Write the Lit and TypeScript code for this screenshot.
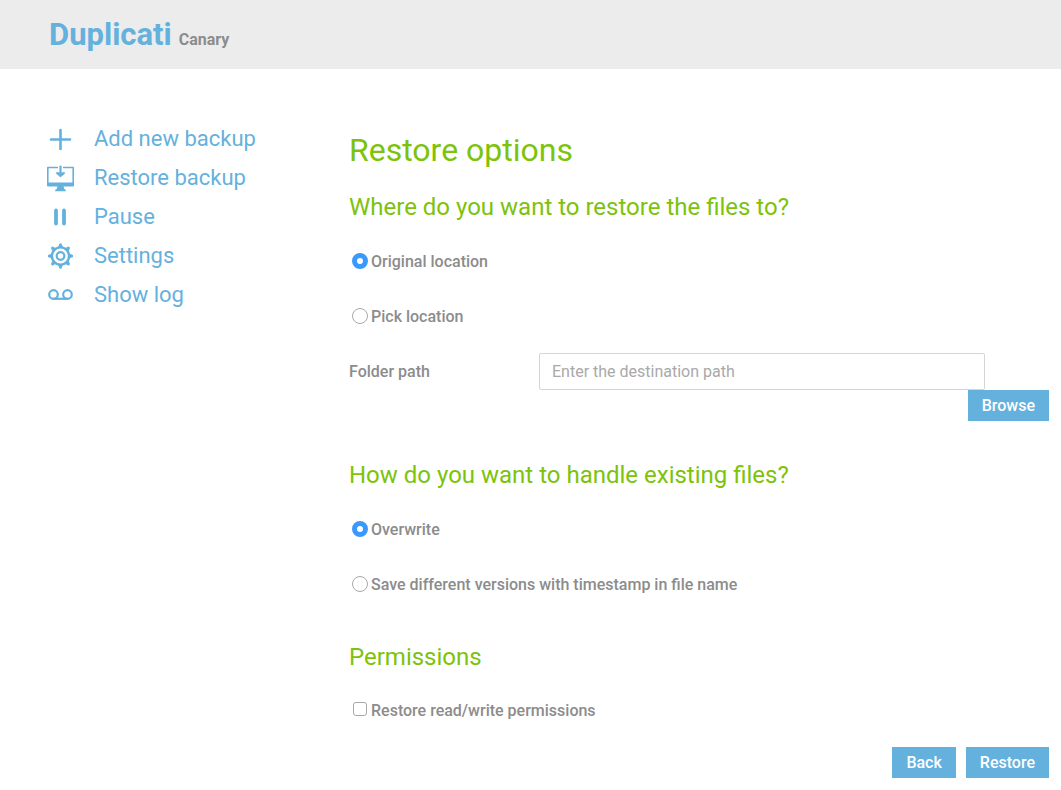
import { LitElement, html, css, svg } from "lit";
import { customElement, state } from "lit/decorators.js";

const icons = {
  add: svg`<path d="M13.500 5v19M4 14.500h19" fill="none" stroke="currentColor" stroke-width="2.600" stroke-linecap="round" />`,
  restore: svg`
    <path d="M11 3.500H.8V20h25.400V3.500H16" fill="none" stroke="currentColor" stroke-width="1.600" stroke-linejoin="round" />
    <path d="M0 18.500h27V21.500q0 1-1 1H1q-1 0-1-1zM10.500 22.500h6l.8 2.500q1.700.3 1.700 2.200H8q0-1.900 1.700-2.200z" fill="currentColor" />
    <path d="M13.500 2.600v7" fill="none" stroke="currentColor" stroke-width="2.200" stroke-linecap="round" />
    <path d="M9.800 8.200q3.700 1.600 7.400 0l.6 1.200L13.500 13 9.200 9.400z" fill="currentColor" stroke="currentColor" stroke-width=".6" stroke-linejoin="round" />`,
  pause: svg`<path d="M9 7.500v13M17 7.500v13" fill="none" stroke="currentColor" stroke-width="3.800" stroke-linecap="round" />`,
  settings: svg`
    <circle cx="13.500" cy="14" r="8.600" fill="none" stroke="currentColor" stroke-width="2.400" />
    <circle cx="13.500" cy="14" r="3.800" fill="none" stroke="currentColor" stroke-width="2.200" />
    ${[0, 45, 90, 135, 180, 225, 270, 315].map(
      (a) => svg`<path d="M10 5.300Q11.900 4.500 12 2.800a1.500 1.500 0 0 1 3 0Q15.100 4.500 17 5.300z" fill="currentColor" transform="rotate(${a} 13.500 14)" />`
    )}`,
  log: svg`
    <circle cx="6.500" cy="13.500" r="4.300" fill="none" stroke="currentColor" stroke-width="2.200" />
    <circle cx="20.500" cy="13.500" r="4.300" fill="none" stroke="currentColor" stroke-width="2.200" />
    <path d="M6.500 17.800h14" stroke="currentColor" stroke-width="2.200" />`,
};

const menu = [
  { label: "Add new backup", icon: icons.add },
  { label: "Restore backup", icon: icons.restore },
  { label: "Pause", icon: icons.pause },
  { label: "Settings", icon: icons.settings },
  { label: "Show log", icon: icons.log },
];

@customElement("app-root")
export class AppRoot extends LitElement {
  @state() private location = "original";
  @state() private existing = "overwrite";

  static styles = css`
    :host {
      display: block;
      min-height: 100vh;
      background: #fff;
      color: #8c8c8c;
      font: 500 16px/24px Roboto, "Noto Sans", sans-serif;
    }
    * {
      box-sizing: border-box;
    }
    header {
      display: flex;
      align-items: baseline;
      gap: 7px;
      padding: 15px 49px 14px;
      background: #ececec;
      font-weight: 700;
    }
    .brand {
      color: #65b1dd;
      font-size: 31px;
      line-height: 40px;
      text-decoration: none;
    }
    .page {
      display: flex;
      padding: 50px 12px 12px 47px;
    }
    nav {
      flex: 0 0 302px;
    }
    nav ul {
      list-style: none;
      margin: 0;
      padding: 0;
    }
    nav a {
      display: flex;
      align-items: center;
      gap: 19px;
      height: 39px;
      color: #65b1dd;
      font-size: 22px;
      font-weight: 400;
      text-decoration: none;
    }
    svg {
      display: block;
      width: 28px;
      height: 28px;
    }
    form {
      flex: 1;
      min-width: 0;
      padding-top: 11px;
    }
    h1,
    h2 {
      margin: 0;
      color: #7cc30a;
      font-weight: 400;
    }
    h1 {
      font-size: 32px;
      line-height: 40px;
    }
    h2 {
      font-size: 24px;
      line-height: 30px;
    }
    fieldset {
      display: block;
      margin: 0;
      padding: 0;
      border: 0;
      min-width: 0;
    }
    legend {
      display: block;
      padding: 0;
    }
    .first {
      margin-top: 22px;
    }
    .existing {
      margin-top: 39px;
    }
    .permissions {
      margin-top: 45px;
    }
    .choices {
      display: grid;
      gap: 31px;
      padding-top: 28px;
    }
    .permissions .choices {
      padding-top: 27px;
    }
    .choice {
      display: flex;
      align-items: center;
      gap: 3px;
      padding-left: 3px;
    }
    .choice input {
      appearance: none;
      flex: none;
      width: 16px;
      height: 16px;
      margin: 0 0 2px;
      border: 1px solid #a9a9a9;
      border-radius: 50%;
      background: #fff;
    }
    .choice input:checked {
      border: 5px solid #3b99fc;
    }
    .choice input[type="checkbox"] {
      width: 14px;
      height: 14px;
      margin: 0 1px 4px;
      border-radius: 3px;
    }
    .choice input[type="checkbox"]:checked {
      background: #3b99fc;
    }
    .folder {
      display: grid;
      grid-template-columns: 190px 1fr;
      align-items: center;
      padding: 24px 64px 0 0;
    }
    .folder input {
      width: 100%;
      height: 37px;
      padding: 0 12px;
      border: 1px solid #d5d5d5;
      border-radius: 2px;
      background: #fff;
      color: #8c8c8c;
      font: inherit;
      font-weight: 400;
    }
    .folder input::placeholder {
      color: #a9a9a9;
      opacity: 1;
    }
    .actions {
      display: flex;
      justify-content: flex-end;
      gap: 10px;
    }
    .submit {
      padding-top: 24px;
    }
    button {
      height: 31px;
      padding: 0 14px;
      border: 0;
      border-radius: 0;
      background: #65b1dd;
      color: #fff;
      font: inherit;
      cursor: pointer;
    }
  `;

  private radio(name: string, value: string, current: string, label: string, pick: (v: string) => void) {
    return html`<label class="choice">
      <input type="radio" name=${name} .value=${value} .checked=${current === value} @change=${() => pick(value)} />
      <span>${label}</span>
    </label>`;
  }

  render() {
    const setLocation = (v: string) => (this.location = v);
    const setExisting = (v: string) => (this.existing = v);
    return html`
      <header><a class="brand" href="#">Duplicati</a><span>Canary</span></header>
      <div class="page">
        <nav>
          <ul>
            ${menu.map(
              (m) => html`<li>
                <a href="#"><svg viewBox="0 0 28 28" aria-hidden="true">${m.icon}</svg><span>${m.label}</span></a>
              </li>`
            )}
          </ul>
        </nav>
        <form @submit=${(e: Event) => e.preventDefault()}>
          <h1>Restore options</h1>
          <fieldset class="first">
            <legend><h2>Where do you want to restore the files to?</h2></legend>
            <div class="choices">
              ${this.radio("location", "original", this.location, "Original location", setLocation)}
              ${this.radio("location", "custom", this.location, "Pick location", setLocation)}
            </div>
            <div class="folder">
              <label for="path">Folder path</label>
              <input id="path" type="text" placeholder="Enter the destination path" />
            </div>
            <div class="actions"><button type="button">Browse</button></div>
          </fieldset>
          <fieldset class="existing">
            <legend><h2>How do you want to handle existing files?</h2></legend>
            <div class="choices">
              ${this.radio("existing", "overwrite", this.existing, "Overwrite", setExisting)}
              ${this.radio("existing", "rename", this.existing, "Save different versions with timestamp in file name", setExisting)}
            </div>
          </fieldset>
          <fieldset class="permissions">
            <legend><h2>Permissions</h2></legend>
            <div class="choices">
              <label class="choice"><input type="checkbox" /><span>Restore read/write permissions</span></label>
            </div>
          </fieldset>
          <div class="actions submit">
            <button type="button">Back</button>
            <button type="submit">Restore</button>
          </div>
        </form>
      </div>
    `;
  }
}
